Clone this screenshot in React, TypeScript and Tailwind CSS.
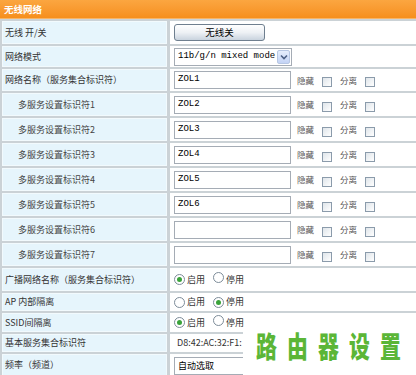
import React from 'react';

const font = { fontFamily: '"Noto Sans CJK SC", "Noto Sans", sans-serif' };

function Check() {
  return <span className="inline-block w-[10px] h-[10px] border border-[#8b9bab] bg-gradient-to-br from-[#dfe5ea] to-white" />;
}

function Radio({ on }: { on?: boolean }) {
  return (
    <span className="inline-flex items-center justify-center w-[11px] h-[11px] rounded-full border border-[#7d8c99] bg-white">
      {on && <span className="w-[5px] h-[5px] rounded-full bg-[#3aa33a]" />}
    </span>
  );
}

function Field({ value }: { value: string }) {
  return (
    <div className="flex items-center h-full pl-[4px]">
      <div className="w-[117px] h-[18px] border border-[#a5acb5] bg-white flex items-center pl-[3px] text-[9px] text-black" style={{ fontFamily: '"Liberation Mono", monospace' }}>
        {value}
      </div>
      <span className="ml-[6px] text-[8.5px] text-[#555]">隐藏</span>
      <span className="ml-[8px]"><Check /></span>
      <span className="ml-[8px] text-[8.5px] text-[#555]">分离</span>
      <span className="ml-[8px]"><Check /></span>
    </div>
  );
}

function Radios({ first }: { first: boolean }) {
  return (
    <div className="flex items-center h-full pl-[4px] text-[9px] text-[#333]">
      <Radio on={first} />
      <span className="ml-[2px]">启用</span>
      <span className="ml-[8px]"><Radio on={!first} /></span>
      <span className="ml-[2px]">停用</span>
    </div>
  );
}

type Row = { label: string; h: string; indent?: boolean; right: React.ReactNode };

const rows: Row[] = [
  {
    label: '无线 开/关',
    h: 'h-[23px]',
    right: (
      <div className="flex items-center h-full pl-[4px]">
        <div className="w-[91px] h-[17px] rounded-[3px] border border-[#6f7f8f] bg-gradient-to-b from-white via-[#eef1f5] to-[#c9d3de] flex items-center justify-center text-[9.5px] text-black">
          无线关
        </div>
      </div>
    ),
  },
  {
    label: '网络模式',
    h: 'h-[21px]',
    right: (
      <div className="flex items-center h-full pl-[4px]">
        <div className="w-[118px] h-[18px] border border-[#a5acb5] bg-white flex items-center justify-between pl-[3px] pr-[1px]">
          <span className="text-[9px] text-black" style={{ fontFamily: '"Liberation Mono", monospace' }}>11b/g/n mixed mode</span>
          <span className="w-[13px] h-[14px] rounded-[2px] border border-[#b7c7e3] bg-gradient-to-b from-[#e6eefc] to-[#c3d3f5] flex items-center justify-center">
            <svg width="8" height="6" viewBox="0 0 8 6"><path d="M1 1.5 L4 4.5 L7 1.5" stroke="#4d6185" strokeWidth="1.6" fill="none" /></svg>
          </span>
        </div>
      </div>
    ),
  },
  { label: '网络名称（服务集合标识符）', h: 'h-[22px]', right: <Field value="ZOL1" /> },
  { label: '多服务设置标识符1', h: 'h-[23px]', indent: true, right: <Field value="ZOL2" /> },
  { label: '多服务设置标识符2', h: 'h-[23px]', indent: true, right: <Field value="ZOL3" /> },
  { label: '多服务设置标识符3', h: 'h-[23px]', indent: true, right: <Field value="ZOL4" /> },
  { label: '多服务设置标识符4', h: 'h-[23px]', indent: true, right: <Field value="ZOL5" /> },
  { label: '多服务设置标识符5', h: 'h-[23px]', indent: true, right: <Field value="ZOL6" /> },
  { label: '多服务设置标识符6', h: 'h-[23px]', indent: true, right: <Field value="" /> },
  { label: '多服务设置标识符7', h: 'h-[23px]', indent: true, right: <Field value="" /> },
  { label: '广播网络名称（服务集合标识符）', h: 'h-[23px]', right: <Radios first /> },
  { label: 'AP 内部隔离', h: 'h-[18px]', right: <Radios first={false} /> },
  { label: 'SSID间隔离', h: 'h-[19px]', right: <Radios first /> },
  {
    label: '基本服务集合标识符',
    h: 'h-[18px]',
    right: <div className="flex items-center h-full pl-[7px] text-[9px] text-[#333]">D8:42:AC:32:F1:</div>,
  },
  {
    label: '频率（频道）',
    h: 'h-[22px]',
    right: (
      <div className="flex items-start h-full pl-[4px] pt-[3px]">
        <div className="w-[150px] h-[18px] border border-[#a5acb5] bg-white flex items-center pl-[3px] text-[9px] text-black">自动选取</div>
      </div>
    ),
  },
];

export default function App() {
  return (
    <div className="relative w-[416px] h-[375px] overflow-hidden bg-[#cbd2d6]" style={font}>
      <div className="h-[19px] bg-gradient-to-b from-[#fba640] to-[#f68f1c] border-b border-[#f8b466] flex items-center pl-[4px]">
        <span className="text-[9.5px] font-bold text-white">无线网络</span>
      </div>
      <div className="grid grid-cols-[165px_1fr] gap-x-[3px] gap-y-[2px] pt-[2px] pl-[2px]">
        {rows.map((r) => (
          <React.Fragment key={r.label}>
            <div className={`${r.h} bg-[#e6f5fc] border border-[#f2fafd] flex items-center text-[9px] text-[#333] whitespace-nowrap ${r.indent ? 'pl-[15px] text-[#444]' : 'pl-[2px]'}`}>
              {r.label}
            </div>
            <div className={`${r.h} bg-white`}>{r.right}</div>
          </React.Fragment>
        ))}
      </div>
      <div className="absolute left-[243px] top-[328px] w-[173px] h-[47px] bg-white flex items-start pt-[3px] pl-[13px]">
        {['路', '由', '器', '设', '置'].map((c) => (
          <span key={c} className="w-[31px] flex justify-start">
            <span className="inline-block text-[29px] leading-none font-black text-[#5bb637] scale-x-[0.72] origin-left">{c}</span>
          </span>
        ))}
      </div>
    </div>
  );
}
